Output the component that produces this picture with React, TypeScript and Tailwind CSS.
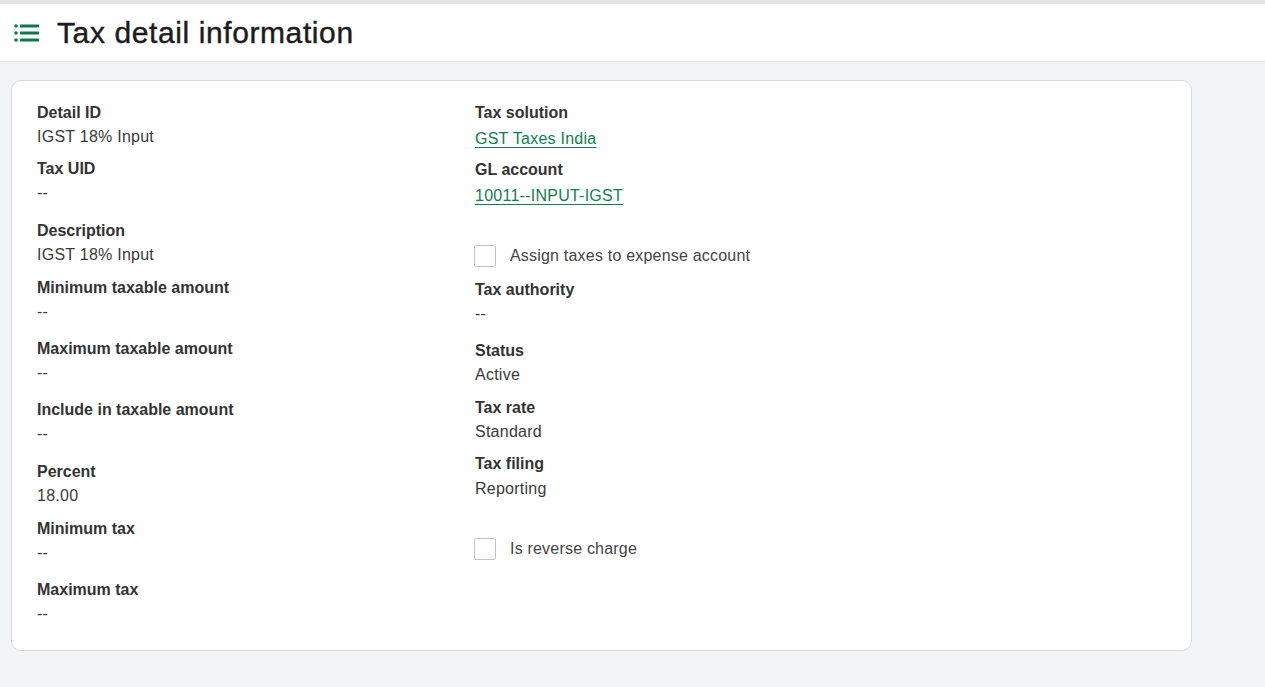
import React from 'react';

interface FieldProps {
  label: string;
  value: string;
  link?: boolean;
  className?: string;
}

const Field: React.FC<FieldProps> = ({ label, value, link, className = '' }) => (
  <div className={className}>
    <div className="text-[16px] leading-6 font-bold text-[#333333]">{label}</div>
    {link ? (
      <div className="mt-[2px] text-[16px] leading-6 tracking-[0.25px]">
        <a href="#" className="text-[#127e4f] underline underline-offset-[3px] decoration-1">
          {value}
        </a>
      </div>
    ) : (
      <div className="text-[16px] leading-6 tracking-[0.25px] text-[#3a3a3a]">{value}</div>
    )}
  </div>
);

const Checkbox: React.FC<{ label: string; className?: string }> = ({ label, className = '' }) => (
  <label className={`flex items-center h-[22px] ${className}`}>
    <span className="w-[22px] h-[22px] border border-[#c4c4c4] rounded-[2px] bg-white" />
    <span className="ml-[14px] text-[16px] tracking-[0.2px] text-[#444444]">{label}</span>
  </label>
);

const ListIcon = () => (
  <svg width="25" height="18" viewBox="0 0 25 18" fill="none">
    <circle cx="2" cy="2" r="1.8" fill="#0b7a45" />
    <circle cx="2" cy="9" r="1.8" fill="#0b7a45" />
    <circle cx="2" cy="16" r="1.8" fill="#0b7a45" />
    <rect x="6" y="0.6" width="19" height="2.8" rx="0.6" fill="#0b7a45" />
    <rect x="6" y="7.6" width="19" height="2.8" rx="0.6" fill="#0b7a45" />
    <rect x="6" y="14.6" width="19" height="2.8" rx="0.6" fill="#0b7a45" />
  </svg>
);

export default function App() {
  return (
    <div
      className="min-h-[687px] bg-[#f3f4f6]"
      style={{ fontFamily: '"Liberation Sans", Arial, sans-serif' }}
    >
      <div className="h-[4px] bg-[#e4e4e4]" />
      <header className="h-[58px] bg-white border-b border-[#e8e8e8] flex items-center">
        <div className="ml-[14px] mt-px">
          <ListIcon />
        </div>
        <h1 className="ml-[18px] text-[30px] tracking-[0.6px] text-[#1c1c1c] leading-none [-webkit-text-stroke:0.4px_#1c1c1c]">
          Tax detail information
        </h1>
      </header>

      <div className="pt-[18px] pl-[11px]">
        <div className="w-[1181px] bg-white border border-[#d9d9d9] rounded-[10px] pl-[25px] pt-[20px] pb-[24px] flex">
          <div className="w-[438px]">
            <Field label="Detail ID" value="IGST 18% Input" className="mb-2" />
            <Field label="Tax UID" value="--" className="mb-[14px]" />
            <Field label="Description" value="IGST 18% Input" className="mb-[9px]" />
            <Field label="Minimum taxable amount" value="--" className="mb-[13px]" />
            <Field label="Maximum taxable amount" value="--" className="mb-[13px]" />
            <Field label="Include in taxable amount" value="--" className="mb-[14px]" />
            <Field label="Percent" value="18.00" className="mb-[9px]" />
            <Field label="Minimum tax" value="--" className="mb-[13px]" />
            <Field label="Maximum tax" value="--" />
          </div>

          <div className="flex-1">
            <Field label="Tax solution" value="GST Taxes India" link className="mb-[7px]" />
            <Field label="GL account" value="10011--INPUT-IGST" link className="mb-[37px]" />
            <Checkbox label="Assign taxes to expense account" className="-ml-px mb-[11px]" />
            <Field label="Tax authority" value="--" className="mb-[13px]" />
            <Field label="Status" value="Active" className="mb-[9px]" />
            <Field label="Tax rate" value="Standard" className="mb-2" />
            <div className="mb-[37px]">
              <div className="text-[16px] leading-6 font-bold text-[#333333]">Tax filing</div>
              <div className="mt-px text-[16px] leading-6 tracking-[0.25px] text-[#3a3a3a]">Reporting</div>
            </div>
            <Checkbox label="Is reverse charge" className="-ml-px" />
          </div>
        </div>
      </div>
    </div>
  );
}
